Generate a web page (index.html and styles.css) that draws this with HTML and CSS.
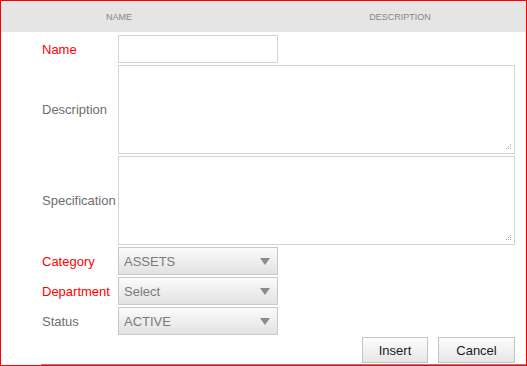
FILE: index.html
```html
<!DOCTYPE html>
<html>
<head>
    <title>Item Entry</title>
    <link rel="stylesheet" href="styles.css">
</head>
<body>
    <div class="panel">
        <div class="grid-head">
            <span class="col-name">NAME</span>
            <span class="col-desc">DESCRIPTION</span>
        </div>

        <form class="entry-form">
            <div class="row">
                <label class="required">Name</label>
                <input type="text" class="text-field">
            </div>
            <div class="row">
                <label>Description</label>
                <div class="area-wrap">
                    <textarea class="area-field"></textarea>
                    <span class="grip"></span>
                </div>
            </div>
            <div class="row">
                <label>Specification</label>
                <div class="area-wrap">
                    <textarea class="area-field"></textarea>
                    <span class="grip"></span>
                </div>
            </div>
            <div class="row">
                <label class="required">Category</label>
                <div class="select-field"><span>ASSETS</span><i class="arrow"></i></div>
            </div>
            <div class="row">
                <label class="required">Department</label>
                <div class="select-field"><span>Select</span><i class="arrow"></i></div>
            </div>
            <div class="row">
                <label>Status</label>
                <div class="select-field"><span>ACTIVE</span><i class="arrow"></i></div>
            </div>
            <div class="actions">
                <button type="button" class="btn btn-insert">Insert</button>
                <button type="button" class="btn btn-cancel">Cancel</button>
            </div>
        </form>
        <div class="footer-line"></div>
    </div>
</body>
</html>
```

FILE: styles.css
```css
body {
    margin: 0;
    font-family: "Liberation Sans", Arial, sans-serif;
    background: white;
}

.panel {
    width: 527px;
    height: 366px;
    box-sizing: border-box;
    border: 1px solid #ff0000;
    overflow: hidden;
}

.grid-head {
    display: flex;
    height: 31px;
    align-items: center;
    background-color: #e5e5e5;
    color: #858585;
    font-size: 9px;
}

.col-name {
    width: 236px;
    text-align: center;
}

.col-desc {
    width: 289px;
    padding-left: 37px;
    box-sizing: border-box;
    text-align: center;
}

.entry-form {
    display: flex;
    flex-direction: column;
    gap: 2px;
    padding: 3px 0 0 41px;
    width: 473px;
}

.row {
    display: flex;
    align-items: center;
}

.row label {
    width: 76px;
    flex-shrink: 0;
    font-size: 13px;
    color: #6e6e6e;
    white-space: nowrap;
}

.row label.required {
    color: #ff0000;
}

.text-field {
    width: 160px;
    height: 28px;
    box-sizing: border-box;
    border: 1px solid #d4d4d4;
    margin: 0;
    padding: 0 4px;
    outline: none;
}

.area-wrap {
    position: relative;
    width: 397px;
    height: 89px;
}

.area-field {
    display: block;
    width: 100%;
    height: 100%;
    box-sizing: border-box;
    border: 1px solid #d4d4d4;
    margin: 0;
    resize: none;
    outline: none;
}

/* dotted resize grip in the corner */
.grip {
    position: absolute;
    right: 4px;
    bottom: 4px;
    width: 6px;
    height: 6px;
    background:
        linear-gradient(#a8a8a8, #a8a8a8) 5px 0 / 1px 1px no-repeat,
        linear-gradient(#a8a8a8, #a8a8a8) 3px 2px / 1px 1px no-repeat,
        linear-gradient(#a8a8a8, #a8a8a8) 5px 2px / 1px 1px no-repeat,
        linear-gradient(#a8a8a8, #a8a8a8) 1px 4px / 1px 1px no-repeat,
        linear-gradient(#a8a8a8, #a8a8a8) 3px 4px / 1px 1px no-repeat,
        linear-gradient(#a8a8a8, #a8a8a8) 5px 4px / 1px 1px no-repeat;
}

.select-field {
    display: flex;
    align-items: center;
    justify-content: space-between;
    width: 160px;
    height: 28px;
    box-sizing: border-box;
    padding: 0 7px 0 5px;
    border: 1px solid #c9c9c9;
    background: linear-gradient(#fbfbfb, #e2e2e2);
    color: #7a7a7a;
    font-size: 13px;
}

.arrow {
    width: 0;
    height: 0;
    border-left: 5px solid transparent;
    border-right: 5px solid transparent;
    border-top: 7px solid #8c8c8c;
}

.actions {
    display: flex;
    justify-content: flex-end;
    gap: 10px;
}

.btn {
    height: 26px;
    box-sizing: border-box;
    border: 1px solid #c4c4c4;
    border-radius: 0;
    background: linear-gradient(#fdfdfd, #e6e6e6);
    font-family: "Liberation Sans", Arial, sans-serif;
    font-size: 13px;
    color: #1a1a1a;
    padding: 0;
}

.btn-insert {
    width: 66px;
}

.btn-cancel {
    width: 77px;
}

.footer-line {
    margin: 1px 0 0 40px;
    border-top: 1px solid #8a8a8a;
}
```
